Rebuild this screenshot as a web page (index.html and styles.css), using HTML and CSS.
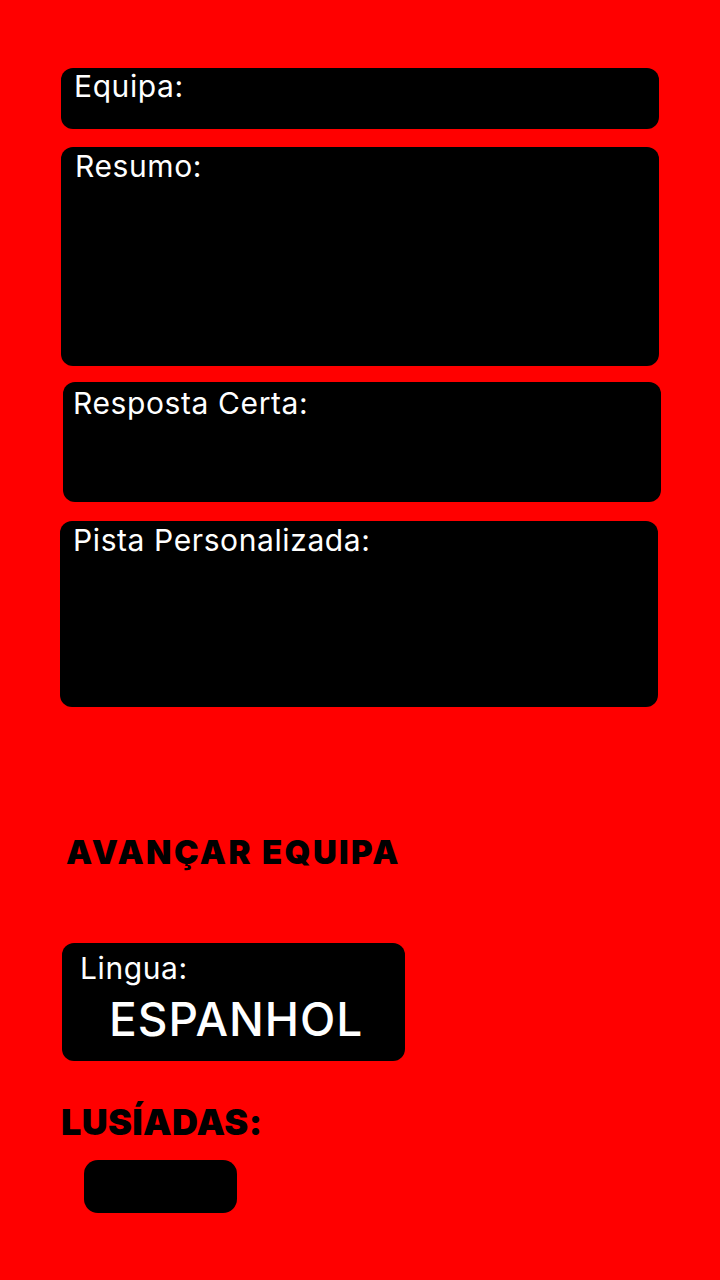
FILE: index.html
```html
<!DOCTYPE html>
<html lang="pt">
<head>
<meta charset="utf-8">
<title>Equipa</title>
<link rel="stylesheet" href="styles.css">
</head>
<body>
<main class="page">
  <section class="field field-equipa"><span class="label">Equipa:</span></section>
  <section class="field field-resumo"><span class="label">Resumo:</span></section>
  <section class="field field-resposta"><span class="label">Resposta Certa:</span></section>
  <section class="field field-pista"><span class="label">Pista Personalizada:</span></section>
  <h2 class="advance">AVANÇAR EQUIPA</h2>
  <section class="lang">
    <span class="label">Lingua:</span>
    <span class="lang-value">ESPANHOL</span>
  </section>
  <h2 class="lusiadas">LUSÍADAS:</h2>
  <div class="pill"></div>
</main>
</body>
</html>
```
FILE: styles.css
```css
html, body {
  margin: 0;
  padding: 0;
  background: #ff0000;
}
body {
  font-family: Inter, "Noto Sans", sans-serif;
  width: 720px;
  height: 1280px;
  overflow: hidden;
}
.page {
  display: flex;
  flex-direction: column;
  align-items: flex-start;
  padding-top: 68px;
}
.field {
  background: #000;
  border-radius: 12px;
  width: 598px;
  box-sizing: border-box;
  padding: 4px 13px 0;
}
.label {
  display: block;
  color: #fff;
  font-size: 30px;
  line-height: 30px;
  font-weight: 400;
  letter-spacing: 0.6px;
}
.field-equipa { margin-left: 61px; height: 61px; padding-top: 3px; }
.field-resumo { margin-left: 61px; height: 219px; margin-top: 18px; padding-left: 14px; }
.field-resposta { margin-left: 63px; height: 120px; margin-top: 16px; padding-left: 10px; padding-top: 6px; }
.field-pista { margin-left: 60px; height: 186px; margin-top: 19px; padding-left: 13px; }
.advance {
  margin: 129px 0 0 66px;
  font-size: 33px;
  line-height: 33px;
  font-weight: 900;
  color: #000;
  letter-spacing: 2.4px;
}
.lang {
  margin: 74px 0 0 62px;
  width: 343px;
  height: 118px;
  box-sizing: border-box;
  background: #000;
  border-radius: 12px;
  padding: 10px 0 0 18px;
  display: flex;
  flex-direction: column;
}
.lang-value {
  color: #fff;
  font-size: 46px;
  line-height: 46px;
  font-weight: 500;
  letter-spacing: 1px;
  margin-top: 13px;
  margin-left: 29px;
}
.lusiadas {
  margin: 43px 0 0 61px;
  font-size: 36px;
  line-height: 36px;
  font-weight: 900;
  letter-spacing: 0.3px;
  color: #000;
}
.pill {
  margin: 20px 0 0 84px;
  width: 153px;
  height: 53px;
  background: #000;
  border-radius: 14px;
}
```
